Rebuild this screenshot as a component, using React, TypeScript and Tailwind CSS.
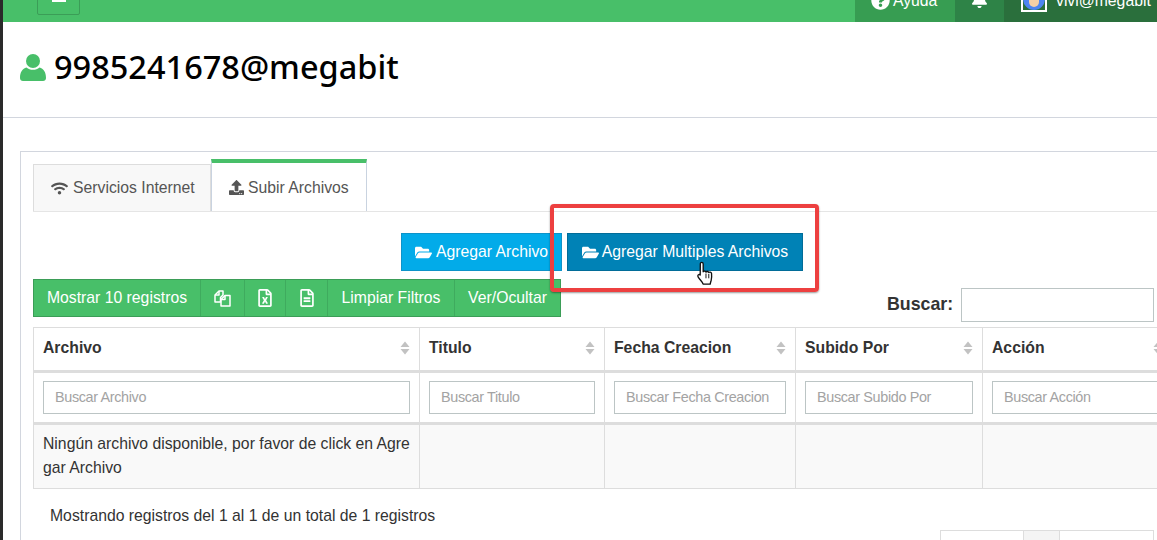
import { FaWifi, FaUpload, FaFolderOpen, FaRegFileExcel, FaRegFileAlt, FaQuestionCircle, FaBell } from "react-icons/fa";

const columns = [
  { title: "Archivo", placeholder: "Buscar Archivo", width: "w-[386px]" },
  { title: "Titulo", placeholder: "Buscar Titulo", width: "w-[185px]" },
  { title: "Fecha Creacion", placeholder: "Buscar Fecha Creacion", width: "w-[191px]" },
  { title: "Subido Por", placeholder: "Buscar Subido Por", width: "w-[187px]" },
  { title: "Acción", placeholder: "Buscar Acción", width: "w-[190px]" },
];

function SortArrows() {
  return (
    <svg width="10" height="14" viewBox="0 0 10 14" className="shrink-0" fill="#c2c2c2">
      <path d="M5 0.5 L9.5 6 H0.5 Z" />
      <path d="M0.5 8 H9.5 L5 13.5 Z" />
    </svg>
  );
}

function UserIcon() {
  return (
    <svg width="26" height="27" viewBox="0 0 26 27" className="shrink-0" fill="#48bf69">
      <circle cx="13" cy="7" r="7" />
      <path d="M0 24c0-6 2.500-9.500 6.500-10.500 1.800 1.500 4 2.300 6.500 2.300s4.700-.8 6.500-2.300C23.500 14.500 26 18 26 24c0 2-1.300 3-3 3H3c-1.700 0-3-1-3-3Z" />
    </svg>
  );
}

function FilesIcon() {
  return (
    <svg width="17" height="17" viewBox="0 0 17 17" fill="none" stroke="#fff" strokeWidth="1.500" strokeLinejoin="round">
      <path d="M5 1H9V5L6.500 7.500V12H1V5Z" />
      <path d="M11 5.500H16V16H7V9.500Z" />
      <path d="M11 5.500V9.500H7" />
      <path d="M5 1V5H1" />
    </svg>
  );
}

function HandCursor() {
  return (
    <svg width="19" height="25" viewBox="0 0 18 26" className="absolute left-[696px] top-[261px]">
      <path
        d="M5 1.500c1 0 1.600.7 1.600 1.700v8c.4-.9 2.600-1 2.900.3.500-.9 2.500-.8 2.900.5.600-.8 2.700-.5 2.900 1.100.2 2.300.2 5-.4 7-.4 1.400-.8 2.500-1 3.900H6.500c-.6-1.800-1.700-2.900-3-4.500C2.500 18.300 1 16.800 1 15.500c0-1.500 1.700-1.800 2.500-.9l.1-11.400C3.600 2.200 4.100 1.500 5 1.500Z"
        fill="#fff"
        stroke="#111"
        strokeWidth="1.400"
        strokeLinejoin="round"
      />
      <path d="M9.500 13v5M12.400 13.500v4.500" stroke="#111" strokeWidth="1" fill="none" />
    </svg>
  );
}

export default function App() {
  return (
    <div className="relative flex h-[540px] w-[1157px] overflow-hidden bg-white font-['Liberation_Sans',Arial,sans-serif] text-[15.750px] text-[#333]">
      <div className="w-[3px] shrink-0 bg-[#2a2a2a]" />
      <div className="min-w-0 flex-1">
        <nav className="flex h-[22px] items-stretch overflow-hidden bg-[#48bf69] text-white">
          <div className="ml-[34px] mt-[-10px] flex h-[25px] w-[43px] items-center justify-center rounded-[2px] border border-[#3b9d57] pt-[2px]">
            <span className="mb-[6px] block h-[2px] w-[14px] bg-white" />
          </div>
          <div className="ml-auto flex w-[100px] items-start gap-[3px] bg-[#379d52] pl-[16px]">
            <FaQuestionCircle className="mt-[-9px] size-[19px]" />
            <span className="mt-[-11px]">Ayuda</span>
          </div>
          <div className="flex w-[49px] justify-center bg-[#2e8347]">
            <FaBell className="mt-[-9px] size-[17px]" />
          </div>
          <div className="flex w-[153px] items-start bg-[#2a6f3c] pl-[17px]">
            <div className="mt-[-14px] flex size-[26px] justify-center overflow-hidden border-2 border-white bg-[#2a6f3c]">
              <div className="flex size-[22px] shrink-0 justify-center overflow-hidden rounded-full bg-[#4c84f0]">
                <div className="h-[19px] w-[10px] rounded-b-full bg-[#f5cfa5]" />
              </div>
            </div>
            <span className="ml-[9px] mt-[-11px] whitespace-nowrap">vivi@megabit</span>
          </div>
        </nav>

        <header className="flex h-[96px] items-center gap-[8px] border-b border-[#d2d6de] pb-[4px] pl-[17px]">
          <UserIcon />
          <h1 className="font-['Noto_Sans',sans-serif] text-[32.500px] font-medium leading-none text-black">
            9985241678@megabit
          </h1>
        </header>

        <section className="ml-[17px] mt-[33px] w-[1200px] border border-[#d2d6de] px-[12px] pt-[8px]">
          <div className="flex h-[52px] items-end border-b border-[#e5e5e5]">
            <div className="flex h-[47px] w-[178px] items-center gap-[5px] border border-b-0 border-[#ddd] bg-[#f8f8f8] pl-[17px] text-[#555]">
              <FaWifi className="size-[17px]" />
              <span>Servicios Internet</span>
            </div>
            <div className="flex h-[52px] w-[156px] items-center gap-[4px] border-x border-x-[#c9d3e0] border-t-[4px] border-t-[#48bf69] bg-white pl-[17px] pt-[1px] text-[#555]">
              <FaUpload className="size-[15px]" />
              <span>Subir Archivos</span>
            </div>
          </div>

          <div className="mt-[21px] flex h-[38px] gap-[5px] pl-[368px]">
            <button className="flex w-[161px] items-center justify-center gap-[4px] border border-[#0d93c9] bg-[#02abe9] text-white">
              <FaFolderOpen className="size-[17px]" />
              <span>Agregar Archivo</span>
            </button>
            <button className="flex w-[236px] items-center justify-center gap-[3px] border border-[#016c98] bg-[#0082b6] text-white">
              <FaFolderOpen className="size-[17px]" />
              <span>Agregar Multiples Archivos</span>
            </button>
          </div>

          <div className="mt-[8px] flex h-[48px] items-start">
            <div className="flex h-[38px] w-[528px] border border-[#3b9d57] bg-[#48bf69] text-white">
              <div className="flex w-[167px] items-center justify-center border-r border-[#3fab5e]">Mostrar 10 registros</div>
              <div className="flex w-[44px] items-center justify-center border-r border-[#3fab5e]"><FilesIcon /></div>
              <div className="flex w-[41px] items-center justify-center border-r border-[#3fab5e]"><FaRegFileExcel className="size-[18px]" /></div>
              <div className="flex w-[42px] items-center justify-center border-r border-[#3fab5e]"><FaRegFileAlt className="size-[18px]" /></div>
              <div className="flex w-[127px] items-center justify-center border-r border-[#3fab5e]">Limpiar Filtros</div>
              <div className="flex flex-1 items-center justify-center">Ver/Ocultar</div>
            </div>
            <label className="ml-[326px] mt-[9px] flex items-center gap-[8px] text-[17.800px] font-bold">
              <span className="pb-[2px]">Buscar:</span>
              <input className="h-[34px] w-[193px] border border-[#bcc5c5] bg-white" />
            </label>
          </div>

          <table className="w-[1139px] table-fixed border-collapse">
            <colgroup>
              {columns.map((c) => (
                <col key={c.title} className={c.width} />
              ))}
            </colgroup>
            <thead>
              <tr>
                {columns.map((c) => (
                  <th key={c.title} className="h-[44px] border border-b-[3px] border-[#ddd] border-b-[#ddd] px-[9px] text-left font-bold text-[#333]">
                    <div className="flex items-center justify-between pb-[2px]">
                      <span>{c.title}</span>
                      <SortArrows />
                    </div>
                  </th>
                ))}
              </tr>
              <tr>
                {columns.map((c) => (
                  <th key={c.title} className="h-[52px] border border-b-[3px] border-[#ddd] px-[9px] font-normal">
                    <input
                      placeholder={c.placeholder}
                      className="box-border h-[33px] w-full border border-[#bcc5c5] bg-white px-[11px] pb-[2px] text-[14.400px] tracking-[-0.35px] placeholder:text-[#a3a3a3]"
                    />
                  </th>
                ))}
              </tr>
            </thead>
            <tbody>
              <tr className="bg-[#f9f9f9]">
                <td className="h-[65px] border border-[#ddd] px-[9px] pb-[2px] align-middle leading-[24px] break-all">
                  Ningún archivo disponible, por favor de click en Agregar Archivo
                </td>
                <td className="border border-[#ddd]" />
                <td className="border border-[#ddd]" />
                <td className="border border-[#ddd]" />
                <td className="border border-[#ddd]" />
              </tr>
            </tbody>
          </table>

          <p className="ml-[17px] mt-[17px] leading-[20px]">Mostrando registros del 1 al 1 de un total de 1 registros</p>

          <div className="ml-[907px] mt-[4px] flex h-[40px] w-[214px] border border-[#ddd]">
            <div className="w-[83px] border-r border-[#ddd]" />
            <div className="w-[36px] border-r border-[#ddd] bg-[#f4f4f4]" />
            <div className="flex-1" />
          </div>
        </section>
      </div>

      <div className="absolute left-[550px] top-[204px] h-[88px] w-[269px] rounded-[4px] border-[4px] border-[#ed4040] shadow-[0_1px_2px_rgba(0,0,0,0.4)]" />
      <HandCursor />
    </div>
  );
}
